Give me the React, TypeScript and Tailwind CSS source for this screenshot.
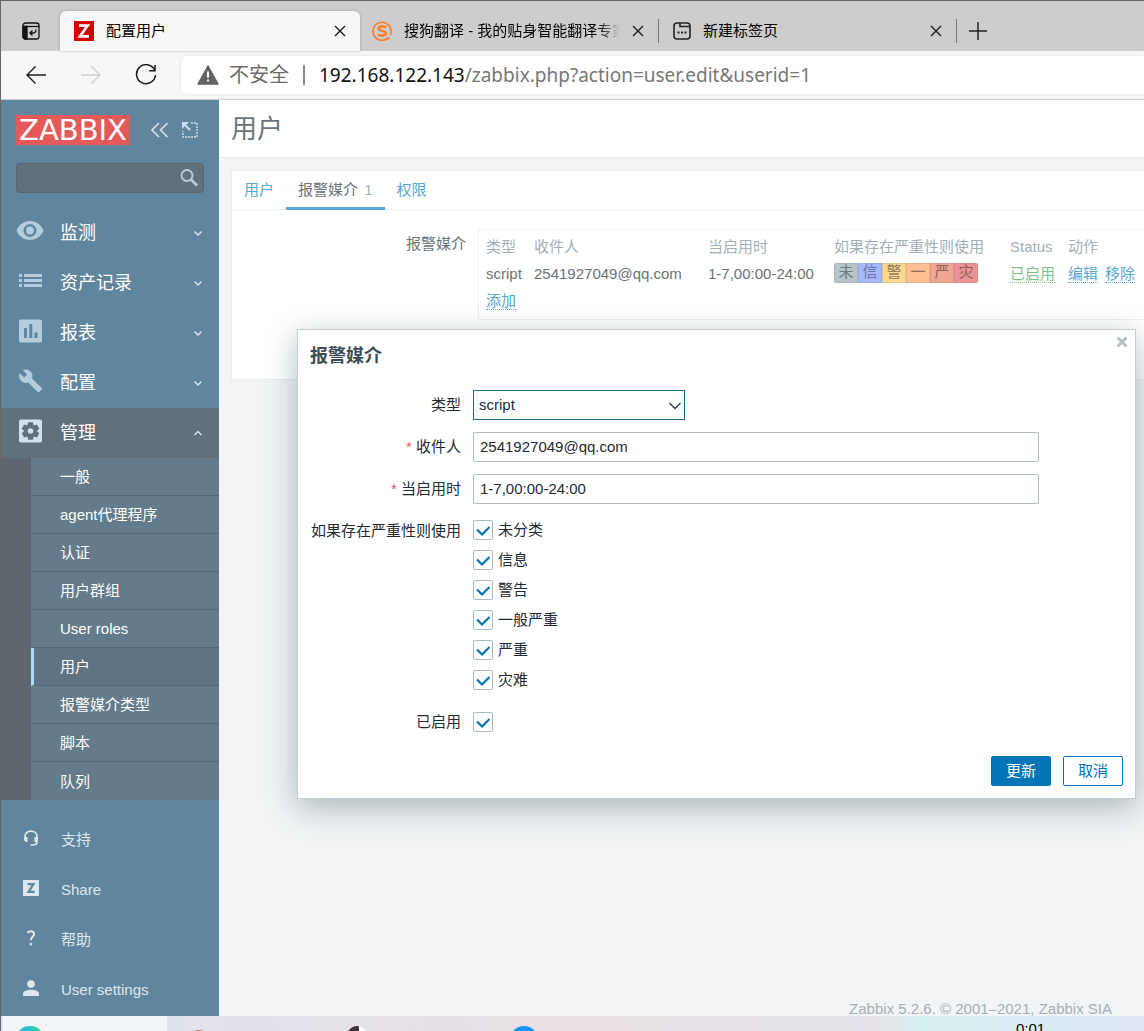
import React, { useState } from 'react';
import { clsx } from 'clsx';

const MENU = [
  { label: '监测', icon: 'eye' },
  { label: '资产记录', icon: 'list' },
  { label: '报表', icon: 'chart' },
  { label: '配置', icon: 'wrench' },
  { label: '管理', icon: 'gear' }
];

const SUBMENU = [
  '一般',
  'agent代理程序',
  '认证',
  '用户群组',
  'User roles',
  '用户',
  '报警媒介类型',
  '脚本',
  '队列'
];

const FOOT_MENU = [
  { label: '支持', icon: 'headset' },
  { label: 'Share', icon: 'share' },
  { label: '帮助', icon: 'help' },
  { label: 'User settings', icon: 'user' }
];

const SEVERITIES = ['未分类', '信息', '警告', '一般严重', '严重', '灾难'];

const SEVERITY_COLORS = [
  'bg-[#b7c5ca] border-[#a9b8bd] text-[#6c7a80]',
  'bg-[#a6b8ff] border-[#9cabdf] text-[#6c75a0]',
  'bg-[#ffd98f] border-[#e6c88a] text-[#8a7a5a]',
  'bg-[#ffbf92] border-[#e6b08c] text-[#8a6f60]',
  'bg-[#f2a592] border-[#dc9a8a] text-[#8a645f]',
  'bg-[#ee9393] border-[#d98a8a] text-[#8a5c60]'
];

const MenuIcon: React.FC<{ name: string }> = ({ name }) => {
  switch (name) {
    case 'eye':
      return (
        <svg viewBox="0 0 28 24" className="w-7 h-6 fill-current">
          <path
            fillRule="evenodd"
            d="M14 2C7.800 2 2.600 6 .5 11.500 2.600 17 7.800 21 14 21s11.400-4 13.500-9.500C25.400 6 20.200 2 14 2zm0 3a6.500 6.500 0 1 1 0 13 6.500 6.500 0 0 1 0-13zm0 2.600a3.900 3.900 0 1 0 0 7.800 3.900 3.900 0 0 0 0-7.800z"
          />
        </svg>
      );
    case 'list':
      return (
        <svg viewBox="0 0 24 24" className="w-6 h-6 fill-current">
          <path d="M1 5h3v3H1zM6 5h18v3H6zM1 10h3v3H1zM6 10h18v3H6zM1 15h3v3H1zM6 15h18v3H6z" />
        </svg>
      );
    case 'chart':
      return (
        <svg viewBox="0 0 24 24" className="w-6 h-6 fill-current">
          <path
            fillRule="evenodd"
            d="M3 .5h19A2 2 0 0 1 24 2.500v19a2 2 0 0 1-2 2H3a2 2 0 0 1-2-2v-19A2 2 0 0 1 3 .5zM6 9v10h3V9zm5.300-4v14h3V5zM16.500 13.500V19h3v-5.500z"
          />
        </svg>
      );
    case 'wrench':
      return (
        <svg viewBox="0 0 24 24" className="w-6 h-6 fill-current">
          <path d="M23.700 19 14 9.500c1-2.400.4-5.200-1.500-7.100C10.400.3 7.300-.1 4.800 1l4.400 4.400-3.100 3.100L1.700 4.200C.5 6.700 1 9.800 3.100 11.900c1.900 1.900 4.700 2.500 7.100 1.500l9.500 9.500c.4.4 1.100.4 1.500 0l2.400-2.400c.5-.4.5-1.100.1-1.500z" />
        </svg>
      );
    default:
      return (
        <svg viewBox="0 0 24 24" className="w-6 h-6">
          <rect x="1" y=".5" width="23" height="23" rx="2" fill="#cfe3f2" />
          <g transform="translate(12.500 12)" fill="#61717c">
            <circle r="6.500" />
            {[0, 60, 120, 180, 240, 300].map((deg) => (
              <path key={deg} d="M-3.200-5-2.400-8.800H2.400L3.200-5z" transform={`rotate(${deg})`} />
            ))}
          </g>
          <circle cx="12.500" cy="12" r="2.800" fill="#cfe3f2" />
        </svg>
      );
  }
};

const FootIcon: React.FC<{ name: string }> = ({ name }) => {
  switch (name) {
    case 'headset':
      return (
        <svg viewBox="0 0 16 16" className="w-4 h-4" fill="none" stroke="currentColor" strokeWidth="1.700">
          <path d="M2 10V6.500C2 3.300 4.500 1.200 8 1.200s6 2.100 6 5.300V12c0 2-1.500 3-4.500 3H7.500" />
          <path d="M1.200 7h3.300v5H2.800L1.200 10.500zM11.500 7h3.300v3.500L13.200 12h-1.700z" fill="currentColor" stroke="none" />
        </svg>
      );
    case 'share':
      return (
        <svg viewBox="0 0 16 16" className="w-4 h-4">
          <rect width="16" height="16" rx="1" fill="currentColor" />
          <path d="M4.500 4.200h6L5.500 11.800h6.200" fill="none" stroke="#5f869e" strokeWidth="2.200" />
        </svg>
      );
    case 'help':
      return (
        <svg viewBox="0 0 16 16" className="w-4 h-4" fill="none" stroke="currentColor" strokeWidth="2">
          <path d="M4.500 3C5.200 1.800 6.300 1.200 7.800 1.200c2 0 3.300 1.100 3.300 2.800 0 2.600-3.300 3-3.300 6.300" />
          <path d="M6.700 13h2.200v2.500H6.700z" fill="currentColor" stroke="none" />
        </svg>
      );
    default:
      return (
        <svg viewBox="0 0 16 16" className="w-4 h-4 fill-current">
          <circle cx="8" cy="4" r="3.800" />
          <path d="M0 16v-2.200C0 10.800 4.500 9.800 8 9.800s8 1 8 4V16z" />
        </svg>
      );
  }
};

const CloseIcon: React.FC = () => (
  <svg viewBox="0 0 12 12" className="w-3 h-3" fill="none" stroke="#1b1b1b" strokeWidth="1.400">
    <path d="M1 1l10 10M11 1 1 11" />
  </svg>
);

const Checkbox: React.FC<{ id: string }> = ({ id }) => {
  const [checked, setChecked] = useState(true);

  return (
    <span className="relative flex w-5 h-5">
      <input
        id={id}
        type="checkbox"
        checked={checked}
        onChange={() => setChecked(!checked)}
        className="w-5 h-5 appearance-none border border-[#acbbc2] rounded-xs bg-white"
      />
      {checked && (
        <svg
          viewBox="0 0 20 20"
          className="absolute inset-0 pointer-events-none"
          fill="none"
          stroke="#0275b8"
          strokeWidth="2.200"
        >
          <path d="M4 9.500l5 5 7.500-7.500" />
        </svg>
      )}
    </span>
  );
};

const BrowserBar: React.FC = () => (
  <header className="bg-[#f7f7f7] border-b border-[#cbcbcb]">
    <div className="flex h-[51px] bg-[#cdcdcd] border-t border-[#666] text-[15px] text-black">
      <button className="w-[59px] pt-2.5 flex items-center justify-center" aria-label="标签页操作">
        <svg viewBox="0 0 18 18" className="w-[18px] h-[18px]" fill="none" stroke="#111" strokeWidth="1.300">
          <rect x="1" y="1" width="16" height="16" rx="2.500" />
          <path d="M1 4.500h16" />
          <path d="M1 4.500h4V17H3a2 2 0 0 1-2-2z" fill="#111" />
          <path d="M14 7.500c0 2.500-1 3.500-3 3.500H8m2.500-2.500L8 11l2.500 2.500" />
        </svg>
      </button>
      <div className="mt-2.5 w-[300px] px-3.5 flex items-center rounded-t-md bg-[#f7f7f7] shadow-[0_0_3px_rgba(0,0,0,0.25)]">
        <svg viewBox="0 0 20 20" className="w-5 h-5 mr-3">
          <path fill="#d40000" d="M0 0h20v20H0z" />
          <path d="M5 4.700h8.500L6 15.300h9" fill="none" stroke="#fff" strokeWidth="2.800" />
        </svg>
        <span className="flex-1">配置用户</span>
        <button aria-label="关闭标签页"><CloseIcon /></button>
      </div>
      <div className="w-[298px] pt-2.5 pl-3 pr-3.5 flex items-center">
        <svg viewBox="0 0 20 20" className="w-5 h-5 mr-3 shrink-0" fill="none" stroke="#fb7d26">
          <path d="M16 17A9 9 0 1 1 19 10.500c0 1.500-.3 2.700-.8 3.700" strokeWidth="1.700" />
          <path d="M14 6.300C11.500 5 6.500 5 6.500 7.600c0 2.900 7.500 1.600 7.500 4.700 0 2.800-5.500 2.700-8.500 1.200" strokeWidth="2.400" />
          <path d="M16.500 16v2.500" strokeWidth="2" />
        </svg>
        <span className="flex-1 overflow-hidden whitespace-nowrap [mask-image:linear-gradient(to_right,black_90%,transparent)]">
          搜狗翻译 - 我的贴身智能翻译专家
        </span>
        <button className="ml-3" aria-label="关闭标签页"><CloseIcon /></button>
      </div>
      <div className="w-[298px] pt-2.5 pr-3.5 flex items-center">
        <span className="mr-3.5 w-px h-6 bg-[#777]" />
        <svg viewBox="0 0 18 18" className="w-[18px] h-[18px] mr-3" fill="none" stroke="#222" strokeWidth="1.600">
          <rect x="1" y="1" width="16" height="16" rx="3" />
          <path d="M7 1v3.500h10" />
          <path d="M4.500 10.500h2M8 10.500h2M11.500 10.500h2" strokeWidth="2" />
        </svg>
        <span className="flex-1">新建标签页</span>
        <button aria-label="关闭标签页"><CloseIcon /></button>
      </div>
      <div className="pt-2.5 flex items-center">
        <span className="w-px h-6 bg-[#777]" />
        <button className="ml-3" aria-label="新建标签页">
          <svg viewBox="0 0 18 18" className="w-[18px] h-[18px]" fill="none" stroke="#222" strokeWidth="1.500">
            <path d="M9 0v18M0 9h18" />
          </svg>
        </button>
      </div>
    </div>

    <div className="flex items-center h-12 pl-6">
      <button aria-label="后退">
        <svg viewBox="0 0 22 20" className="w-[22px] h-5" fill="none" stroke="#1b1b1b" strokeWidth="1.400">
          <path d="M21 10H2M10.500 1.500 2 10l8.500 8.500" />
        </svg>
      </button>
      <button className="ml-[33px]" aria-label="前进" disabled>
        <svg viewBox="0 0 22 20" className="w-[22px] h-5" fill="none" stroke="#cfcfcf" strokeWidth="1.400">
          <path d="M1 10h19M11.500 1.500 20 10l-8.500 8.500" />
        </svg>
      </button>
      <button className="ml-[33px]" aria-label="刷新">
        <svg viewBox="0 0 22 22" className="w-[22px] h-[22px]" fill="none" stroke="#1b1b1b" strokeWidth="1.500">
          <path d="M20 7A9.500 9.500 0 1 0 20.500 11M20 1v5.700h-5.700" />
        </svg>
      </button>
      <div className="ml-6 flex-1 h-[38px] px-4 flex items-center rounded-l-md bg-white text-xl shadow-[0_0_4px_rgba(0,0,0,0.08)] whitespace-nowrap">
        <svg viewBox="0 0 22 20" className="w-[22px] h-5 mr-2.5">
          <path d="M11 1 21 19H1z" fill="#636363" stroke="#636363" strokeWidth="1.500" strokeLinejoin="round" />
          <path d="M11 6.500v6M11 14.500v2" stroke="#fff" strokeWidth="2" />
        </svg>
        <span className="text-[#6b6b6b]">不安全</span>
        <span className="mx-3.5 w-0.5 h-5 bg-[#8a8a8a]" />
        <span className="font-['Noto_Sans',sans-serif] text-[19px] text-[#777]">
          <span className="text-[#111]">192.168.122.143</span>
          /zabbix.php?action=user.edit&amp;userid=1
        </span>
      </div>
    </div>
  </header>
);

const Sidebar: React.FC = () => (
  <aside className="w-[218px] shrink-0 flex flex-col bg-[#5f869e] text-white">
    <div className="flex items-center pt-[15px] pl-[15px] pr-5">
      <a
        href="#"
        className="w-[114px] h-[30px] flex items-center justify-center bg-[#e45959] font-['DejaVu_Sans',sans-serif] text-[29px] leading-[30px]"
      >
        ZABBIX
      </a>
      <button className="ml-5" aria-label="折叠侧边栏">
        <svg viewBox="0 0 18 16" className="w-[18px] h-4" fill="none" stroke="#cfe0ea" strokeWidth="1.700">
          <path d="M9 1 2 8l7 7M17.500 1l-7 7 7 7" />
        </svg>
      </button>
      <button className="ml-3.5" aria-label="隐藏侧边栏">
        <svg viewBox="0 0 16 16" className="w-4 h-4" fill="none" stroke="#cfe0ea">
          <path d="M9 1h6v14H1V9" strokeWidth="1.400" strokeDasharray="2 1" />
          <path d="M0 0h7L0 7z" fill="#cfe0ea" stroke="none" />
          <path d="M3 3l5 5" strokeWidth="2" />
        </svg>
      </button>
    </div>

    <div className="relative mt-[18px] ml-[15px] mr-[15px]">
      <input
        aria-label="搜索"
        className="block w-full h-[30px] px-2 pr-9 rounded-sm border border-[#55646d] bg-[#61717c] text-[15px]"
      />
      <button className="absolute right-1.5 top-1.5" aria-label="提交搜索">
        <svg viewBox="0 0 18 18" className="w-[18px] h-[18px]" fill="none" stroke="#b9ccd8">
          <circle cx="7" cy="6.500" r="5.500" strokeWidth="2" />
          <path d="M11 10.500l6 6" strokeWidth="2.600" />
        </svg>
      </button>
    </div>

    <nav className="mt-[15px]">
      {MENU.map((item) => {
        const open = item.label === '管理';
        return (
          <a
            key={item.label}
            href="#"
            className={clsx('flex items-center h-[50px] pl-[15px] pr-4 text-lg', open && 'bg-[#61717c]')}
          >
            <span className="w-7 mr-4 pb-1 flex justify-center text-[#b3cddc]">
              <MenuIcon name={item.icon} />
            </span>
            <span className="flex-1">{item.label}</span>
            <svg viewBox="0 0 10 6" className="w-2.5 h-1.5" fill="none" stroke="#d5e3eb" strokeWidth="1.500">
              <path d={open ? 'M1.500 5 5 1.500 8.500 5' : 'M1.500 1.500 5 5l3.500-3.500'} />
            </svg>
          </a>
        );
      })}
    </nav>

    <div className="pl-[30px] bg-[#5d676d]">
      {SUBMENU.map((label) => (
        <a
          key={label}
          href="#"
          className={clsx(
            'flex items-center h-[38px] pt-0.5 border-b border-b-[#55676f] last:border-b-0 text-[15px]',
            label === '用户'
              ? 'bg-[#5f7382] border-l-3 border-l-[#a9dcff] pl-[26px]'
              : 'bg-[#637b8a] pl-[29px]'
          )}
        >
          {label}
        </a>
      ))}
    </div>

    <nav className="mt-auto pb-px">
      {FOOT_MENU.map((item) => (
        <a key={item.label} href="#" className="flex items-center h-[50px] pl-[22px] text-[15px] text-[#dfe7ec]">
          <span className="mr-[22px] pb-1">
            <FootIcon name={item.icon} />
          </span>
          {item.label}
        </a>
      ))}
    </nav>
  </aside>
);

const MediaTable: React.FC = () => (
  <div className="shrink-0 border border-[#eef0f1] px-px py-1">
    <table className="w-[670px] table-fixed text-left whitespace-nowrap text-[#6a7378]">
      <colgroup>
        <col className="w-[48px]" />
        <col className="w-[174px]" />
        <col className="w-[126px]" />
        <col className="w-[176px]" />
        <col className="w-[58px]" />
        <col className="w-[88px]" />
      </colgroup>
      <thead>
        <tr className="h-[27px] text-[#a3b0b7]">
          {['类型', '收件人', '当启用时', '如果存在严重性则使用', 'Status', '动作'].map((title) => (
            <th key={title} className="pl-1.5 font-normal">{title}</th>
          ))}
        </tr>
      </thead>
      <tbody>
        <tr className="h-[27px]">
          <td className="pl-1.5">script</td>
          <td className="pl-1.5">2541927049@qq.com</td>
          <td className="pl-1.5">1-7,00:00-24:00</td>
          <td className="pl-1.5">
            <div className="flex pb-1">
              {SEVERITIES.map((name, i) => (
                <span
                  key={name}
                  className={clsx(
                    'w-6 h-5 flex items-center justify-center border first:rounded-l-xs last:rounded-r-xs',
                    SEVERITY_COLORS[i]
                  )}
                >
                  {name[0]}
                </span>
              ))}
            </div>
          </td>
          <td className="pl-1.5">
            <a href="#" className="border-b border-dotted border-[#7fbf87] text-[#7fbf87]">已启用</a>
          </td>
          <td className="pl-1.5">
            <a href="#" className="mr-[7px] border-b border-dotted border-[#5aa5d3] text-[#5aa5d3]">编辑</a>
            <a href="#" className="border-b border-dotted border-[#5aa5d3] text-[#5aa5d3]">移除</a>
          </td>
        </tr>
        <tr className="h-[27px]">
          <td className="pl-1.5" colSpan={6}>
            <a href="#" className="border-b border-dotted border-[#5aa5d3] text-[#5aa5d3]">添加</a>
          </td>
        </tr>
      </tbody>
    </table>
  </div>
);

const MediaDialog: React.FC = () => {
  const [sendTo, setSendTo] = useState('2541927049@qq.com');
  const [period, setPeriod] = useState('1-7,00:00-24:00');

  return (
    <div
      role="dialog"
      aria-labelledby="dialog-title"
      className="absolute left-[78px] right-2 top-[229px] p-3 bg-white border border-[#c4ced2] text-[15px] text-[#1f2c33] shadow-[0_8px_30px_rgba(80,105,115,0.45)]"
    >
      <button className="absolute right-[7px] top-1.5" aria-label="关闭">
        <svg viewBox="0 0 12 12" className="w-3 h-3" fill="none" stroke="#b5c1c7" strokeWidth="3">
          <path d="M1.500 1.500l9 9M10.500 1.500l-9 9" />
        </svg>
      </button>
      <h4 id="dialog-title" className="text-lg leading-7 font-bold text-[#3c4f58]">报警媒介</h4>

      <form onSubmit={(e) => e.preventDefault()}>
        <div className="mt-5 mb-[18px] grid grid-cols-[151px_1fr] gap-3 leading-[30px]">
          <label htmlFor="type" className="text-right">类型</label>
          <div className="relative w-[212px]">
            <select
              id="type"
              defaultValue="script"
              className="block w-full h-[30px] px-[5px] appearance-none border border-[#1f6d96] bg-white leading-7"
            >
              <option>script</option>
            </select>
            <svg
              viewBox="0 0 12 8"
              className="absolute right-1 top-3 w-3 h-2 pointer-events-none"
              fill="none"
              stroke="#2b3940"
              strokeWidth="1.300"
            >
              <path d="M.5 1 6 6.500 11.500 1" />
            </svg>
          </div>

          <label htmlFor="sendto" className="text-right">
            <span className="text-[#e45959]">*</span> 收件人
          </label>
          <input
            id="sendto"
            value={sendTo}
            onChange={(e) => setSendTo(e.target.value)}
            className="w-full max-w-[566px] h-[30px] px-1.5 border border-[#acbbc2] rounded-xs"
          />

          <label htmlFor="period" className="text-right">
            <span className="text-[#e45959]">*</span> 当启用时
          </label>
          <input
            id="period"
            value={period}
            onChange={(e) => setPeriod(e.target.value)}
            className="w-full max-w-[566px] h-[30px] px-1.5 border border-[#acbbc2] rounded-xs"
          />

          <span id="severity-label" className="text-right leading-[30px]">如果存在严重性则使用</span>
          <ul aria-labelledby="severity-label" className="flex flex-col gap-0.5">
            {SEVERITIES.map((name, i) => (
              <li key={name} className="flex items-center h-7 gap-[5px]">
                <Checkbox id={`severity-${i}`} />
                <label htmlFor={`severity-${i}`}>{name}</label>
              </li>
            ))}
          </ul>

          <label htmlFor="enabled" className="text-right leading-8">已启用</label>
          <div className="flex items-center h-8">
            <Checkbox id="enabled" />
          </div>
        </div>

        <div className="flex justify-end gap-3">
          <button type="submit" className="w-[60px] h-[30px] rounded-xs border border-[#0275b8] bg-[#0275b8] text-white">
            更新
          </button>
          <button type="button" className="w-[60px] h-[30px] rounded-xs border border-[#0275b8] text-[#0275b8]">
            取消
          </button>
        </div>
      </form>
    </div>
  );
};

const Taskbar: React.FC = () => (
  <div className="flex h-[15px] overflow-hidden bg-linear-to-r from-[#dde3ef] via-[#e9e0e4] to-[#dfe7f2] text-[15px]">
    <div className="ml-0.5 w-[164px] pl-3 pt-2.5 bg-[#f2f5fa]">
      <div className="w-[30px] h-[30px] rounded-full bg-linear-to-r from-[#2bb0f5] via-[#25c5c8] to-[#4fd873]" />
    </div>
    <div className="flex-1 flex pt-2.5">
      <div className="ml-[22px] mt-1 w-5 h-5 rounded-full bg-[#e8705f]" />
      <div className="ml-[138px] w-5 h-5 rounded-full bg-linear-to-r from-[#43313f] from-60% to-white to-60%" />
      <div className="ml-[143px] w-7 h-7 rounded-full bg-[#1693f5]" />
    </div>
    <div className="w-[280px] pl-[152px] pt-[3px] leading-5 text-black bg-linear-to-r from-[#e9e0e4] via-[#d6f0f1] via-20% to-[#dfe7f2]">
      0:01
    </div>
  </div>
);

const App: React.FC = () => (
  <div className="min-h-screen flex flex-col overflow-hidden border-l border-[#666] bg-[#f2f4f5] font-['Liberation_Sans','Noto_Sans_CJK_SC',sans-serif]">
    <BrowserBar />

    <div className="flex-1 flex">
      <Sidebar />

      <main className="relative flex-1 min-w-0 flex flex-col text-[15px]">
        <h1 className="h-[58px] pl-3 border-b border-[#e6e9eb] bg-white text-[26px] leading-[58px] text-[#69757b]">
          用户
        </h1>

        <section className="mt-3 ml-3 min-h-[210px] border border-r-0 border-[#e9ebed] bg-white overflow-hidden">
          <nav className="flex h-[39px] pr-3 border-b border-[#eef0f1] text-[#5aa5d3]">
            <a href="#" className="px-3 leading-[38px]">用户</a>
            <a href="#" className="h-[39px] px-3 border-b-3 border-[#5aa5d3] leading-[38px] text-[#6a7378]">
              报警媒介 <span className="ml-0.5 text-[#a3b0b7]">1</span>
            </a>
            <a href="#" className="px-3 leading-[38px]">权限</a>
          </nav>
          <div className="flex pt-[19px]">
            <span className="w-[234px] mr-3 shrink-0 text-right leading-[30px] text-[#6a7378]">报警媒介</span>
            <MediaTable />
          </div>
        </section>

        <MediaDialog />

        <footer className="mt-auto pr-8 text-right leading-[14px] text-[#a3b0b7]">
          Zabbix 5.2.6. © 2001–2021, Zabbix SIA
        </footer>
      </main>
    </div>

    <Taskbar />
  </div>
);

export default App;
